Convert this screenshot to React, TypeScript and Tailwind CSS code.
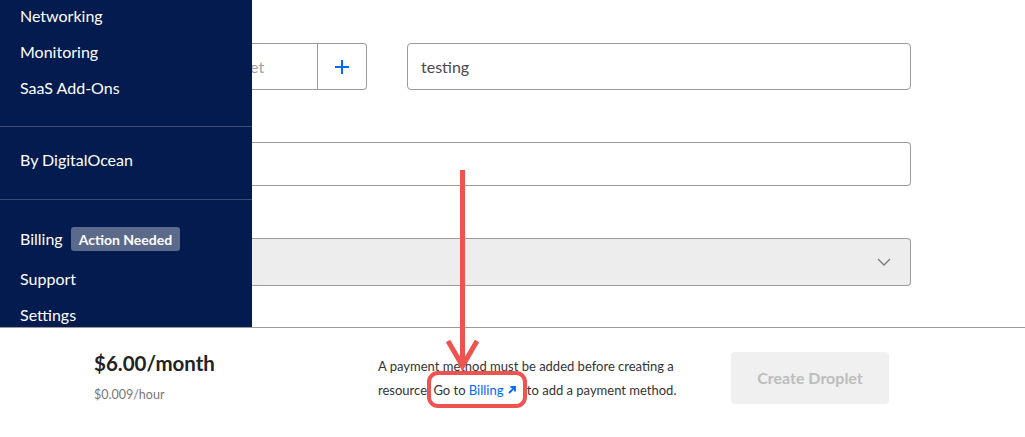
import React from "react";

function SideItem({ children }: { children: React.ReactNode }) {
  return <div className="h-[36px] shrink-0 flex items-center pl-5 text-[16px] text-white">{children}</div>;
}

export default function App() {
  return (
    <div className="relative w-[1025px] h-[437px] overflow-hidden bg-white flex flex-col font-['Lato',sans-serif]">
      <div className="flex h-[327px] shrink-0">
        <aside className="w-[252px] shrink-0 bg-[#031b4e] flex flex-col overflow-hidden">
          <div className="-mt-[2px]">
            <SideItem>Networking</SideItem>
            <SideItem>Monitoring</SideItem>
            <SideItem>SaaS Add-Ons</SideItem>
          </div>
          <div className="h-[20px] shrink-0" />
          <div className="border-t border-[#3c4e78]" />
          <div className="h-[72px] shrink-0 flex items-center pl-5 pb-[6px] text-[16px] text-white">By DigitalOcean</div>
          <div className="border-t border-[#3c4e78]" />
          <div className="h-[21px] shrink-0" />
          <div className="h-[36px] shrink-0 flex items-center pl-5 text-[16px] text-white gap-2">
            <span>Billing</span>
            <span className="bg-[#5b6a8a] text-white font-bold text-[14px] rounded-[3px] px-2 h-[24px] flex items-center">Action Needed</span>
          </div>
          <div className="h-[4px] shrink-0" />
          <SideItem>Support</SideItem>
          <SideItem>Settings</SideItem>
        </aside>
        <main className="flex-1 flex flex-col pr-[114px] text-[#444]">
          <div className="h-[43px]" />
          <div className="flex h-[47px]">
            <div className="w-[115px] flex border border-l-0 border-[#9b9b9b] rounded-r-[4px]">
              <div className="flex-1 overflow-hidden flex items-center text-[16px] text-[#a0a0a0]">
                <span className="-ml-[2px]">et</span>
              </div>
              <div className="w-[49px] border-l border-[#9b9b9b] flex items-center justify-center">
                <svg width="16" height="16" viewBox="0 0 16 16" fill="none" stroke="#0069ff" strokeWidth="2">
                  <path d="M8 1v14M1 8h14" />
                </svg>
              </div>
            </div>
            <div className="w-[40px]" />
            <div className="flex-1 border border-[#9b9b9b] rounded-[4px] flex items-center pl-[13px] text-[16px] text-[#4a4a4a]">
              testing
            </div>
          </div>
          <div className="h-[52px]" />
          <div className="h-[44px] border border-l-0 border-[#9b9b9b] rounded-r-[4px]" />
          <div className="h-[52px]" />
          <div className="h-[48px] border border-l-0 border-[#9b9b9b] rounded-r-[4px] bg-[#ededed] flex items-center justify-end pr-[19px]">
            <svg width="14" height="8" viewBox="0 0 14 8" fill="none" stroke="#777" strokeWidth="1.3">
              <path d="M1 1l6 6 6-6" />
            </svg>
          </div>
        </main>
      </div>
      <footer className="flex-1 border-t border-[#9b9b9b] flex items-center pl-[94px] pb-[10px]">
        <div className="w-[284px] flex flex-col">
          <div className="text-[20.5px] font-bold text-[#222] leading-[24px]">$6.00/month</div>
          <div className="text-[12.5px] text-[#777] mt-[11px]">$0.009/hour</div>
        </div>
        <div className="w-[310px] text-[13px] leading-[24px] text-[#333]">
          A payment method must be added before creating a resource. Go to{" "}
          <span className="text-[#0069ff]">
            Billing
            <svg className="inline-block ml-[4px] mr-[8px] mb-[2px]" width="8" height="8" viewBox="0 0 8 8" fill="none" stroke="#0069ff" strokeWidth="1.8">
              <path d="M1 7L7 1M2.5 1H7v4.5" />
            </svg>
          </span>{" "}
          to add a payment method.
        </div>
        <div className="ml-[43px] w-[158px] h-[52px] rounded-[4px] bg-[#f0f0f0] flex items-center justify-center text-[16px] font-bold text-[#bdbdbd]">
          Create Droplet
        </div>
      </footer>
      <svg className="absolute left-0 top-0 pointer-events-none" width="1025" height="437" viewBox="0 0 1025 437" fill="none">
        <path d="M462.5 170V366" stroke="#ef5350" strokeWidth="5" />
        <path d="M448 341L462.5 366L477 341" stroke="#ef5350" strokeWidth="5" strokeLinejoin="miter" />
        <rect x="429" y="373" width="96" height="33" rx="9" stroke="#ef5350" strokeWidth="4" />
      </svg>
    </div>
  );
}
